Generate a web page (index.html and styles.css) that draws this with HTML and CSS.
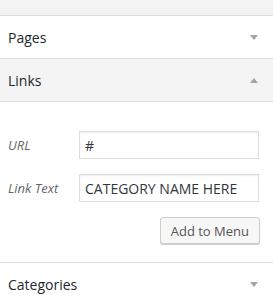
FILE: index.html
```html
<!DOCTYPE html>
<html lang="en">

<head>
    <meta charset="UTF-8">
    <meta name="viewport" content="width=device-width, initial-scale=1.0">
    <title>Menu Items</title>
    <link rel="stylesheet" href="styles.css">
</head>

<body>
    <div class="top-space"></div>

    <div class="accordion">
        <div class="accordion-section">
            <h3 class="accordion-title">Pages <span class="arrow arrow--down"></span></h3>
        </div>

        <div class="accordion-section open">
            <h3 class="accordion-title">Links <span class="arrow arrow--up"></span></h3>
            <div class="accordion-content">
                <form class="custom-links">
                    <div class="field-row">
                        <label for="url">URL</label>
                        <input id="url" type="text" value="#">
                    </div>

                    <div class="field-row">
                        <label for="link-text">Link Text</label>
                        <input id="link-text" type="text" value="CATEGORY NAME HERE">
                    </div>

                    <div class="form-actions">
                        <button type="submit">Add to Menu</button>
                    </div>
                </form>
            </div>
        </div>

        <div class="accordion-section">
            <h3 class="accordion-title">Categories <span class="arrow arrow--down"></span></h3>
        </div>
    </div>
</body>

</html>
```

FILE: styles.css
```css
body {
    margin: 0;
    background-color: #f3f3f3;
    font-family: "Open Sans", "Liberation Sans", sans-serif;
    color: #23282d;
}

.top-space {
    height: 15px;
}

.accordion {
    border-top: 1px solid #dddddd;
}

.accordion-section {
    background-color: white;
    border-bottom: 1px solid #dddddd;
}

.accordion-title {
    display: flex;
    align-items: center;
    justify-content: space-between;
    height: 42px;
    margin: 0;
    padding: 0 15px 0 8px;
    font-size: 14px;
    font-weight: 400;
}

.accordion-section.open .accordion-title {
    background-color: #f4f4f4;
    border-bottom: 1px solid #dddddd;
}

.arrow {
    width: 0;
    height: 0;
    border-left: 4px solid transparent;
    border-right: 4px solid transparent;
}

.arrow--down {
    border-top: 5px solid #a0a5aa;
}

.arrow--up {
    border-bottom: 5px solid #a0a5aa;
}

.accordion-content {
    padding: 29px 14px 18px 8px;
}

.custom-links {
    display: flex;
    flex-direction: column;
    gap: 15px;
}

.field-row {
    display: flex;
    align-items: center;
}

.field-row label {
    width: 71px;
    font-size: 13px;
    font-style: italic;
    color: #666666;
}

.field-row input {
    box-sizing: border-box;
    width: 180px;
    height: 28px;
    padding: 0 5px;
    border: 1px solid #dddddd;
    box-shadow: inset 0 1px 2px rgba(0, 0, 0, 0.07);
    font-family: inherit;
    font-size: 14px;
    color: #32373c;
}

.form-actions {
    display: flex;
    justify-content: flex-end;
    margin-right: -1px;
}

button {
    box-sizing: border-box;
    height: 27px;
    padding: 0 10px;
    background-color: #f7f7f7;
    color: #555555;
    border: 1px solid #cccccc;
    border-radius: 3px;
    box-shadow: 0 1px 0 #cccccc;
    font-family: inherit;
    font-size: 13px;
    cursor: pointer;
}
```
